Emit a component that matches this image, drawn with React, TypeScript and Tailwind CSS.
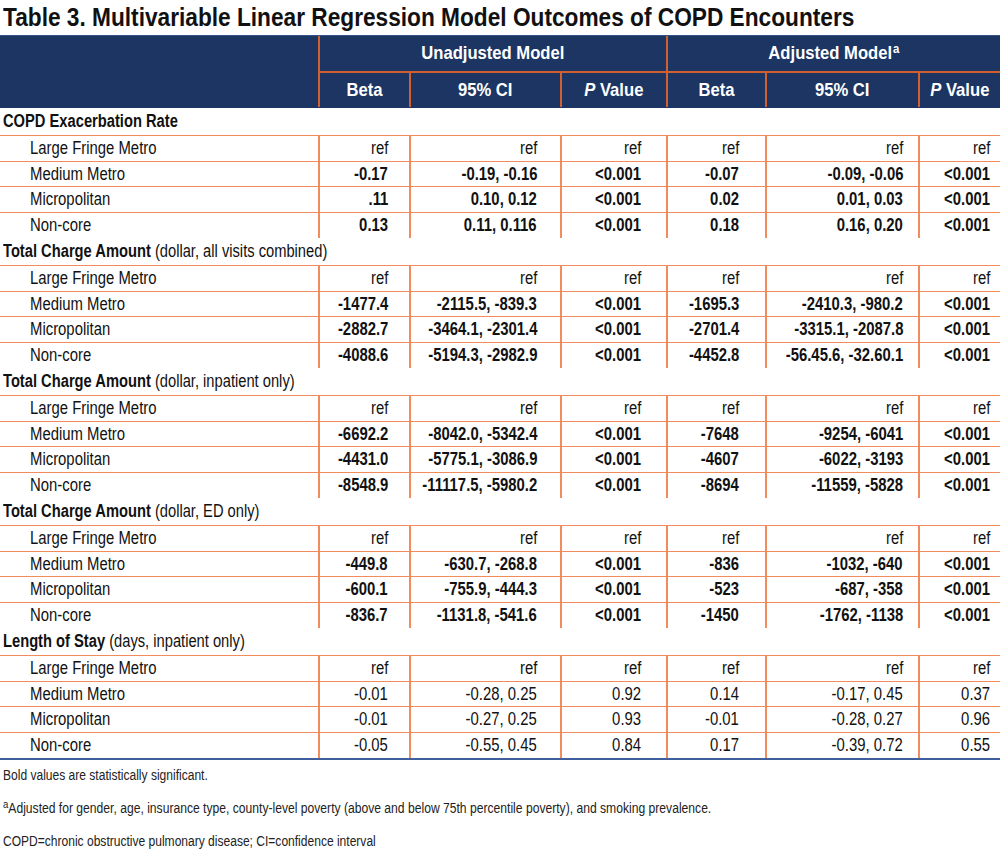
import React from "react";

type Row = [string, string[], boolean];
type Section = { title: string; sub: string; rows: Row[] };

const REF: Row = ["Large Fringe Metro", ["ref", "ref", "ref", "ref", "ref", "ref"], false];

const sections: Section[] = [
  {
    title: "COPD Exacerbation Rate",
    sub: "",
    rows: [
      REF,
      ["Medium Metro", ["-0.17", "-0.19, -0.16", "<0.001", "-0.07", "-0.09, -0.06", "<0.001"], true],
      ["Micropolitan", [".11", "0.10, 0.12", "<0.001", "0.02", "0.01, 0.03", "<0.001"], true],
      ["Non-core", ["0.13", "0.11, 0.116", "<0.001", "0.18", "0.16, 0.20", "<0.001"], true],
    ],
  },
  {
    title: "Total Charge Amount",
    sub: " (dollar, all visits combined)",
    rows: [
      REF,
      ["Medium Metro", ["-1477.4", "-2115.5, -839.3", "<0.001", "-1695.3", "-2410.3, -980.2", "<0.001"], true],
      ["Micropolitan", ["-2882.7", "-3464.1, -2301.4", "<0.001", "-2701.4", "-3315.1, -2087.8", "<0.001"], true],
      ["Non-core", ["-4088.6", "-5194.3, -2982.9", "<0.001", "-4452.8", "-56.45.6, -32.60.1", "<0.001"], true],
    ],
  },
  {
    title: "Total Charge Amount",
    sub: " (dollar, inpatient only)",
    rows: [
      REF,
      ["Medium Metro", ["-6692.2", "-8042.0, -5342.4", "<0.001", "-7648", "-9254, -6041", "<0.001"], true],
      ["Micropolitan", ["-4431.0", "-5775.1, -3086.9", "<0.001", "-4607", "-6022, -3193", "<0.001"], true],
      ["Non-core", ["-8548.9", "-11117.5, -5980.2", "<0.001", "-8694", "-11559, -5828", "<0.001"], true],
    ],
  },
  {
    title: "Total Charge Amount",
    sub: " (dollar, ED only)",
    rows: [
      REF,
      ["Medium Metro", ["-449.8", "-630.7, -268.8", "<0.001", "-836", "-1032, -640", "<0.001"], true],
      ["Micropolitan", ["-600.1", "-755.9, -444.3", "<0.001", "-523", "-687, -358", "<0.001"], true],
      ["Non-core", ["-836.7", "-1131.8, -541.6", "<0.001", "-1450", "-1762, -1138", "<0.001"], true],
    ],
  },
  {
    title: "Length of Stay",
    sub: " (days, inpatient only)",
    rows: [
      REF,
      ["Medium Metro", ["-0.01", "-0.28, 0.25", "0.92", "0.14", "-0.17, 0.45", "0.37"], false],
      ["Micropolitan", ["-0.01", "-0.27, 0.25", "0.93", "-0.01", "-0.28, 0.27", "0.96"], false],
      ["Non-core", ["-0.05", "-0.55, 0.45", "0.84", "0.17", "-0.39, 0.72", "0.55"], false],
    ],
  },
];

const cols = [
  { w: "w-[91px]", pr: "pr-[21px]" },
  { w: "w-[151px]", pr: "pr-[23px]" },
  { w: "w-[106px]", pr: "pr-[25px]" },
  { w: "w-[99px]", pr: "pr-[26px]" },
  { w: "w-[153px]", pr: "pr-[15px]" },
  { w: "w-[82px]", pr: "pr-[10px]" },
];

const FONT = "font-['Liberation_Sans',Arial,sans-serif]";

export default function App() {
  return (
    <div className={`w-[1000px] h-[858px] bg-white text-[#111] overflow-hidden ${FONT}`}>
      <div className="h-[35px] pl-[3px] flex items-center text-[25px] font-bold leading-none">
        <span className="inline-block whitespace-nowrap origin-left scale-x-[0.907]">
          Table 3. Multivariable Linear Regression Model Outcomes of COPD Encounters
        </span>
      </div>

      {/* Header */}
      <div className="flex bg-[#1c3563] text-white font-bold text-[19px] border-t border-[#34528a]">
        <div className="w-[318px] h-[72px]" />
        <div className="flex-1 flex flex-col">
          <div className="flex h-[37px] border-b-2 border-[#d0602f]">
            <div className="w-[348px] border-l-2 border-[#d0602f] flex items-center justify-center">
              <span className="inline-block whitespace-nowrap origin-center scale-x-[0.875]">Unadjusted Model</span>
            </div>
            <div className="flex-1 border-l-2 border-[#d0602f] flex items-center justify-center">
              <span className="inline-block whitespace-nowrap origin-center scale-x-[0.875]">
                Adjusted Model<sup className="text-[13px] ml-[1px]">a</sup>
              </span>
            </div>
          </div>
          <div className="flex h-[34px]">
            {["Beta", "95% CI", "P", "Beta", "95% CI", "P"].map((h, i) => (
              <div
                key={i}
                className={`${cols[i].w} border-l-2 border-[#d0602f] flex items-center justify-center`}
              >
                <span className="inline-block whitespace-nowrap origin-center scale-x-[0.875]">
                  {h === "P" ? (
                    <>
                      <i>P</i> Value
                    </>
                  ) : (
                    h
                  )}
                </span>
              </div>
            ))}
          </div>
        </div>
      </div>

      {/* Body */}
      <div className="text-[17.5px] border-b-2 border-[#3f5f9c]">
        {sections.map((s, si) => (
          <div key={si}>
            <div className="h-[28px] pl-[3px] flex items-center border-b border-[#f28c5c]">
              <span className="inline-block whitespace-pre origin-left scale-x-[0.84]">
                <b>{s.title}</b>
                {s.sub}
              </span>
            </div>
            {s.rows.map((r, ri) => (
              <div
                key={ri}
                className={`flex h-[25.5px] ${ri < s.rows.length - 1 ? "border-b border-[#f28c5c]" : ""}`}
              >
                <div className="w-[318px] pl-[30px] flex items-center">
                  <span className="inline-block whitespace-nowrap origin-left scale-x-[0.85]">{r[0]}</span>
                </div>
                {r[1].map((v, vi) => (
                  <div
                    key={vi}
                    className={`${cols[vi].w} ${cols[vi].pr} border-l-2 border-[#f28c5c] flex items-center justify-end ${
                      r[2] ? "font-bold" : ""
                    }`}
                  >
                    <span className="inline-block whitespace-nowrap origin-right scale-x-[0.85]">{v}</span>
                  </div>
                ))}
              </div>
            ))}
          </div>
        ))}
      </div>

      {/* Footnotes */}
      <div className="pl-[3px] pt-[6px] flex flex-col gap-[15px] text-[14px] leading-[18px] text-[#222]">
        <div>
          <span className="inline-block whitespace-nowrap origin-left scale-x-[0.86]">
            Bold values are statistically significant.
          </span>
        </div>
        <div>
          <span className="inline-block whitespace-nowrap origin-left scale-x-[0.866]">
            <sup className="text-[11px]">a</sup>Adjusted for gender, age, insurance type, county-level poverty (above and
            below 75th percentile poverty), and smoking prevalence.
          </span>
        </div>
        <div>
          <span className="inline-block whitespace-nowrap origin-left scale-x-[0.86]">
            COPD=chronic obstructive pulmonary disease; CI=confidence interval
          </span>
        </div>
      </div>
    </div>
  );
}
